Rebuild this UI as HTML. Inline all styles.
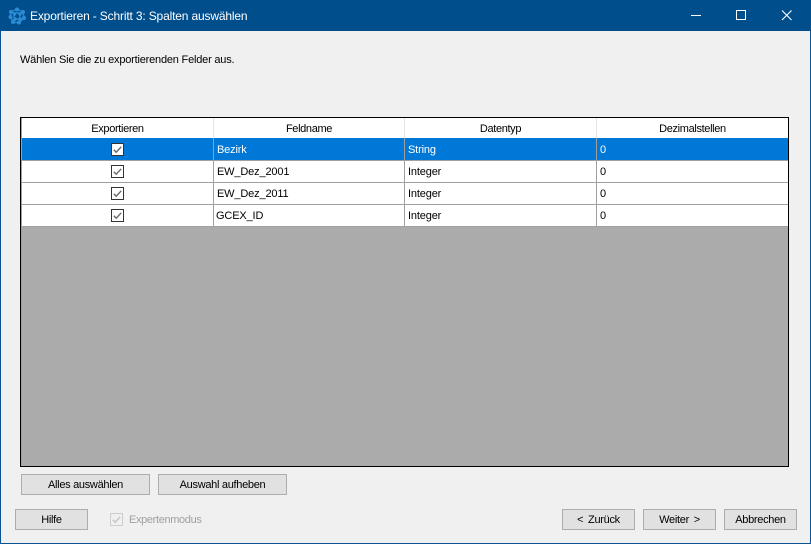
<!DOCTYPE html>
<html><head><meta charset="utf-8">
<style>
html,body{margin:0;padding:0;}
body{width:811px;height:544px;overflow:hidden;position:relative;background:#f0f0f0;font-family:"Liberation Sans",sans-serif;font-size:11px;color:#000;}
div,span{position:absolute;white-space:nowrap;box-sizing:border-box;}
.btn{background:#e1e1e1;border:1px solid #adadad;height:21px;text-align:center;line-height:21px;letter-spacing:-.3px;}
.h{top:118px;height:20px;line-height:23px;text-align:center;background:#fff;letter-spacing:-.35px;}
.vs{width:1px;background:#a0a0a0;top:138px;height:88px;}
.vh{width:1px;background:#e3e3e3;top:118px;height:20px;}
.hs{left:22px;width:766px;height:1px;background:#a0a0a0;}
.c{line-height:22px;height:22px;letter-spacing:-.15px;}
</style></head>
<body>
<div style="left:0;top:0;width:811px;height:544px;border:1px solid #0b5394;border-top:none;"></div>
<div style="left:0;top:0;width:811px;height:31px;background:#004e8c;"></div>
<svg style="position:absolute;left:8px;top:7px" width="18" height="18" viewBox="0 0 18 18">
<g stroke="#2a84c8" stroke-width="1.4" fill="none"><path d="M3 5L9 2L15 5L16 11L11 16L5 15L2 10Z"/><path d="M6 6H12V12H6Z"/><path d="M3 5L6 6M15 5L12 6M5 15L6 12M11 16L12 12"/></g>
<g fill="#2a8cd4"><circle cx="3" cy="5" r="2"/><circle cx="9" cy="2.500" r="2"/><circle cx="15" cy="5" r="2"/><circle cx="16" cy="11" r="2"/><circle cx="11" cy="15.500" r="2"/><circle cx="5" cy="15" r="2"/><circle cx="2.500" cy="10" r="2"/><circle cx="6.500" cy="7" r="1.800"/><circle cx="12" cy="7" r="1.800"/><circle cx="7" cy="12" r="1.800"/><circle cx="12" cy="12" r="1.800"/></g></svg>
<div style="left:30px;top:7px;color:#fff;font-size:12px;line-height:18px;letter-spacing:-.16px;">Exportieren - Schritt 3: Spalten auswählen</div>
<svg style="position:absolute;left:690px;top:8px" width="110" height="16" viewBox="0 0 110 16" shape-rendering="crispEdges">
<rect x="1" y="7" width="10" height="1" fill="#fff"/>
<rect x="46.500" y="2.500" width="9" height="9" fill="none" stroke="#fff"/>
<path d="M92 2.500L101.500 12M101.500 2.500L92 12" stroke="#fff" stroke-width="1.100" fill="none" shape-rendering="auto"/>
</svg>
<div style="left:20px;top:53px;line-height:15px;letter-spacing:-.2px;">Wählen Sie die zu exportierenden Felder aus.</div>

<div style="left:20px;top:117px;width:769px;height:350px;background:#ababab;border:1px solid #000;"></div>
<div style="left:21px;top:118px;width:767px;height:1px;background:#a0a0a0;"></div>
<div style="left:21px;top:118px;width:1px;height:348px;background:#a0a0a0;"></div>

<div class="h" style="left:22px;width:191px;">Exportieren</div>
<div class="h" style="left:214px;width:190px;">Feldname</div>
<div class="h" style="left:405px;width:191px;">Datentyp</div>
<div class="h" style="left:597px;width:191px;">Dezimalstellen</div>
<div class="vh" style="left:213px"></div><div class="vh" style="left:404px"></div><div class="vh" style="left:596px"></div>

<div style="left:22px;top:138px;width:766px;height:22px;background:#0078d7;"></div>
<div style="left:22px;top:161px;width:766px;height:65px;background:#fff;"></div>
<div class="hs" style="top:160px"></div><div class="hs" style="top:182px"></div><div class="hs" style="top:204px"></div><div class="hs" style="top:226px"></div>
<div class="vs" style="left:213px"></div><div class="vs" style="left:404px"></div><div class="vs" style="left:596px"></div>

<svg style="position:absolute;left:111px;top:143px" width="13" height="80" viewBox="0 0 13 80">
<g><rect x=".5" y=".5" width="12" height="12" fill="#fff" stroke="#333"/><path d="M2.800 6.800L5.200 9.200L10.200 3.800" fill="none" stroke="#6a6a6a" stroke-width="1.400"/></g>
<g transform="translate(0,22)"><rect x=".5" y=".5" width="12" height="12" fill="#fff" stroke="#333"/><path d="M2.800 6.800L5.200 9.200L10.200 3.800" fill="none" stroke="#6a6a6a" stroke-width="1.400"/></g>
<g transform="translate(0,44)"><rect x=".5" y=".5" width="12" height="12" fill="#fff" stroke="#333"/><path d="M2.800 6.800L5.200 9.200L10.200 3.800" fill="none" stroke="#6a6a6a" stroke-width="1.400"/></g>
<g transform="translate(0,66)"><rect x=".5" y=".5" width="12" height="12" fill="#fff" stroke="#333"/><path d="M2.800 6.800L5.200 9.200L10.200 3.800" fill="none" stroke="#6a6a6a" stroke-width="1.400"/></g>
</svg>

<div class="c" style="left:217px;top:139px;color:#fff">Bezirk</div>
<div class="c" style="left:408px;top:139px;color:#fff">String</div>
<div class="c" style="left:600px;top:139px;color:#fff">0</div>
<div class="c" style="left:217px;top:161px">EW_Dez_2001</div>
<div class="c" style="left:408px;top:161px">Integer</div>
<div class="c" style="left:600px;top:161px">0</div>
<div class="c" style="left:217px;top:183px">EW_Dez_2011</div>
<div class="c" style="left:408px;top:183px">Integer</div>
<div class="c" style="left:600px;top:183px">0</div>
<div class="c" style="left:216px;top:205px">GCEX_ID</div>
<div class="c" style="left:408px;top:205px">Integer</div>
<div class="c" style="left:600px;top:205px">0</div>

<div class="btn" style="left:21px;top:474px;width:129px;">Alles auswählen</div>
<div class="btn" style="left:158px;top:474px;width:129px;">Auswahl aufheben</div>
<div class="btn" style="left:15px;top:509px;width:73px;">Hilfe</div>
<svg style="position:absolute;left:110px;top:513px" width="13" height="13" viewBox="0 0 13 13"><rect x=".5" y=".5" width="12" height="12" fill="#f0f0f0" stroke="#ccc"/><path d="M2.800 6.800L5.200 9.200L10.200 3.800" fill="none" stroke="#c4c4c4" stroke-width="1.400"/></svg>
<div style="left:129px;top:513px;line-height:14px;color:#a0a0a0;letter-spacing:-.35px;">Expertenmodus</div>
<div class="btn" style="left:562px;top:509px;width:73px;word-spacing:2px;">&lt; Zurück</div>
<div class="btn" style="left:643px;top:509px;width:73px;word-spacing:2px;">Weiter &gt;</div>
<div class="btn" style="left:724px;top:509px;width:73px;">Abbrechen</div>
</body></html>
